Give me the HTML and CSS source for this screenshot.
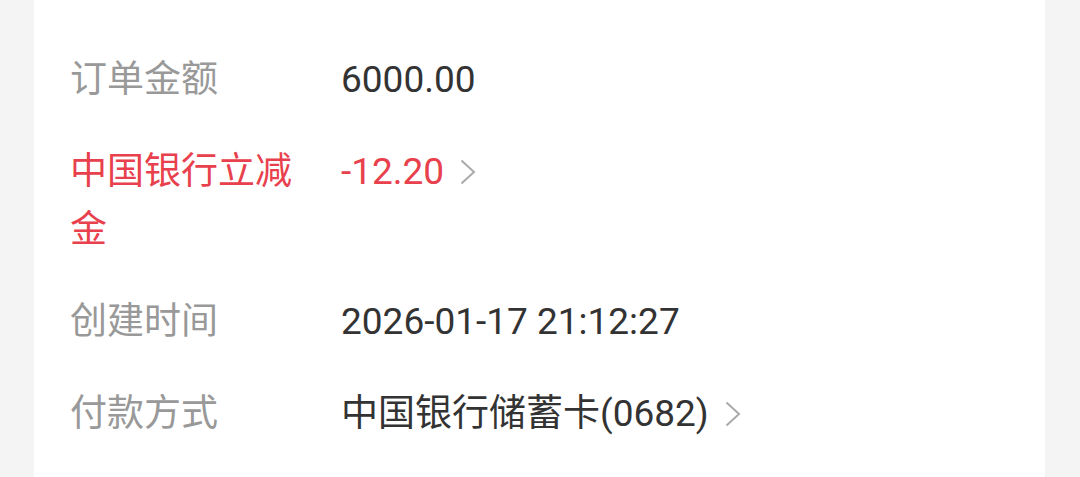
FILE: index.html
```html
<!DOCTYPE html>
<html lang="zh-CN">
<head>
    <meta charset="UTF-8">
    <meta name="viewport" content="width=device-width, initial-scale=1.0">
    <title>订单详情</title>
    <link rel="stylesheet" href="styles.css">
</head>
<body>
    <div id="card">
        <div class="row">
            <div class="label">订单金额</div>
            <div class="value">6000.00</div>
        </div>
        <div class="row red">
            <div class="label">中国银行立减金</div>
            <div class="value">-12.20
                <svg class="arrow" viewBox="0 0 16 26"><path d="M1.5 1.5 L14 13 L1.5 24.5"/></svg>
            </div>
        </div>
        <div class="row">
            <div class="label">创建时间</div>
            <div class="value">2026-01-17 21:12:27</div>
        </div>
        <div class="row">
            <div class="label">付款方式</div>
            <div class="value">中国银行储蓄卡(0682)
                <svg class="arrow" viewBox="0 0 16 26"><path d="M1.5 1.5 L14 13 L1.5 24.5"/></svg>
            </div>
        </div>
    </div>
</body>
</html>
```

FILE: styles.css
```css
body {
    font-family: Roboto, "Noto Sans CJK SC", sans-serif;
    background-color: #f4f4f4;
    margin: 0;
    padding: 0;
}
#card {
    margin: 0 35px 0 34px;
    min-height: 477px;
    box-sizing: border-box;
    padding: 51px 36px 0;
    background-color: #fff;
    display: flex;
    flex-direction: column;
    gap: 34px;
}
.row {
    display: flex;
    font-size: 37px;
    line-height: 58px;
}
.label {
    width: 240px;
    margin-right: 31px;
    flex-shrink: 0;
    color: #999;
}
.value {
    color: #333;
    display: flex;
    align-items: center;
    height: 58px;
}
.red .label,
.red .value {
    color: #e8404c;
}
.arrow {
    width: 16px;
    height: 26px;
    margin-left: 16px;
    fill: none;
    stroke: #aaa;
    stroke-width: 2;
}
```
